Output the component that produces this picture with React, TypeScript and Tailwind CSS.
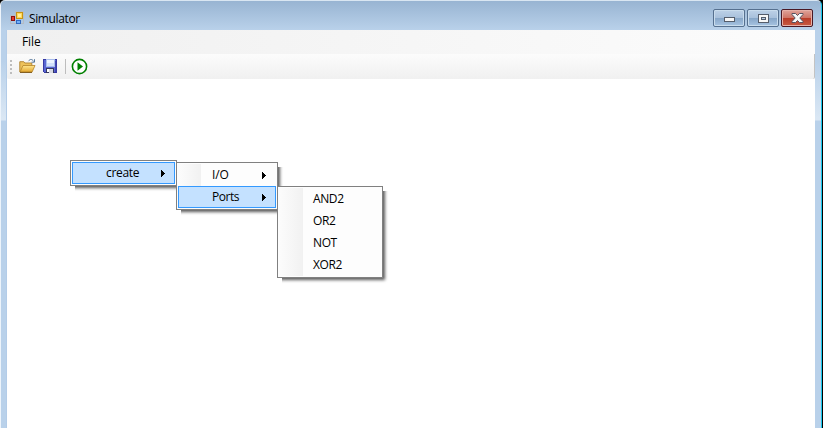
import type { ReactNode } from "react";

const label = "font-['Open_Sans','Noto_Sans',sans-serif] text-[12px] leading-[16px] text-black whitespace-nowrap";

function AppIcon() {
  return (
    <svg width="14" height="14" viewBox="0 0 14 14" shapeRendering="crispEdges">
      <path d="M5.5 4.5V.5h8v12h-13v-8h5Z" fill="none" stroke="#b5bcc4" />
      <rect x="1" y="5" width="4" height="5" fill="#8d1010" />
      <rect x="2" y="6" width="2" height="3" fill="#e83b2d" />
      <rect x="6" y="1" width="7" height="7" fill="#c69413" />
      <rect x="7" y="2" width="5" height="5" fill="#ffd75a" />
      <rect x="8" y="3" width="3" height="3" fill="#fff09c" />
      <rect x="6" y="9" width="5" height="4" fill="#2f68c0" />
      <rect x="7" y="10" width="3" height="2" fill="#72b0fa" />
    </svg>
  );
}

function OpenIcon() {
  return (
    <svg width="17" height="16" viewBox="0 0 17 16">
      <defs>
        <linearGradient id="folder" x1="0" y1="0" x2="0" y2="1">
          <stop offset="0" stopColor="#ffe68f" />
          <stop offset="1" stopColor="#e2a52c" />
        </linearGradient>
      </defs>
      <path d="M.8 14V3.7h4l1 1.3h7v3" fill="#eec25a" stroke="#b58a3a" />
      <path d="M1 14.2 4 7.5h12L13 14.2Z" fill="url(#folder)" stroke="#b48428" strokeWidth=".8" />
      <path d="M1 14.4h12" stroke="#7b581b" />
      <path d="M9.5 3.2C11 .8 13 .8 14.8 3.5M15.5 1.2v3h-3" fill="none" stroke="#56789b" />
    </svg>
  );
}

function SaveIcon() {
  return (
    <svg width="14" height="14" viewBox="0 0 14 14" shapeRendering="crispEdges">
      <path d="M0 0h14v14H1l-1-1Z" fill="#3739a3" />
      <path d="M1 1h12v12H1Z" fill="#5966d2" />
      <path d="M3 0h9v8H3Z" fill="#a9bdec" />
      <path d="M4 1h7v3H4Z" fill="#edf4ff" />
      <path d="M4 4h7v3H4Z" fill="#d3e1fb" />
      <path d="M3 9h8v5H3Z" fill="#34385f" />
      <path d="M6 10h4v4H6Z" fill="#d8dae2" />
      <path d="M4 10h2v3H4Z" fill="#ffffff" />
      <path d="M12 2h1v11h-1Z" fill="#4248b2" />
    </svg>
  );
}

function RunIcon() {
  return (
    <svg width="17" height="17" viewBox="0 0 17 17">
      <circle cx="8.5" cy="8.5" r="7.1" fill="#fff" stroke="#008000" strokeWidth="1.6" />
      <path d="M6.5 4.3v8.4L12 8.5Z" fill="#008000" />
    </svg>
  );
}

function CaptionButton({ close = false, children }: { close?: boolean; children: ReactNode }) {
  const tone = close
    ? "border-[#491824] bg-[linear-gradient(#dfa49b_0%,#cf7668_47%,#b83b28_50%,#c85b43_100%)] shadow-[inset_0_0_0_1px_#e6b0a8]"
    : "border-[#56708f] bg-[linear-gradient(#bdd1e7_0%,#a9c1dc_47%,#86a5c7_50%,#a7c4e2_100%)] shadow-[inset_0_0_0_1px_#c9dced]";
  return (
    <div className={`flex h-[18px] w-8 items-center justify-center rounded-[2px] border ${tone}`}>
      {children}
    </div>
  );
}

function Arrow() {
  return (
    <svg className="shrink-0" width="4" height="7" viewBox="0 0 4 7" shapeRendering="crispEdges">
      <path d="M0 0h1v1h1v1h1v1h1v1H3v1H2v1H1v1H0Z" fill="#000" />
    </svg>
  );
}

const panel = "absolute border border-[#808080] bg-[#fdfdfd] p-px";
const shadow = "shadow-[2px_2px_3px_0px_rgba(0,0,0,0.65)] [clip-path:polygon(0_0,100%_0,100%_5px,calc(100%+8px)_5px,calc(100%+8px)_calc(100%+8px),5px_calc(100%+8px),5px_100%,0_100%)]";
const gutter = "bg-[linear-gradient(90deg,#fcfcfc,#f1f1f1)]";

function ContextMenus() {
  return (
    <>
      <div className={`${panel} ${shadow} left-[70px] top-[160px] h-[26px] w-[107px]`}>
        <div className="flex h-full items-center border border-[#3399ff] bg-[#c4e1ff] pl-[33px] pr-[9px]">
          <span className={`${label} tracking-[-0.3px]`}>create</span>
          <span className="ml-auto"><Arrow /></span>
        </div>
      </div>
      <div className={`${panel} ${shadow} left-[176px] top-[162px] h-[48px] w-[102px]`}>
        <div className="flex h-[22px] items-center pr-[10px]">
          <div className={`h-full w-[23px] ${gutter}`} />
          <span className={`${label} ml-[11px] tracking-[-0.1px]`}>I/O</span>
          <span className="ml-auto"><Arrow /></span>
        </div>
        <div className="flex h-[22px] items-center border border-[#3399ff] bg-[#c4e1ff] pl-[33px] pr-[9px]">
          <span className={`${label} tracking-[-0.45px]`}>Ports</span>
          <span className="ml-auto"><Arrow /></span>
        </div>
      </div>
      <div className={`${panel} ${shadow} left-[277px] top-[186px] flex h-[92px] w-[106px]`}>
        <div className={`h-full w-[24px] ${gutter}`} />
        <ul className="ml-[10px]">
          {["AND2", "OR2", "NOT", "XOR2"].map((name) => (
            <li key={name} className={`${label} flex h-[22px] items-center tracking-[-0.4px]`}>{name}</li>
          ))}
        </ul>
      </div>
    </>
  );
}

export default function App() {
  return (
    <div className="relative h-[428px] w-[823px] overflow-hidden bg-black">
      <div className="flex h-full w-[822px] flex-col overflow-hidden rounded-t-[5px] border-x border-t border-l-[#edf4fb] border-r-[#16c8ee] border-t-[#d9e6f2] bg-[linear-gradient(#98b4d2_0px,#b9d1ea_29px,#b9d1ea_60px,#dae7f4_117px,#dae7f4_119px,#b9d1ea_120px)]">
        <header className="flex h-[29px] shrink-0 items-start pl-[9px] pr-2">
          <div className="mt-[10px]"><AppIcon /></div>
          <h1 className={`${label} ml-[5px] mt-[10px] tracking-[-0.37px]`}>Simulator</h1>
          <div className="ml-auto mt-2 flex gap-[2px]">
            <CaptionButton>
              <svg width="11" height="5" shapeRendering="crispEdges" className="mt-[3px]">
                <rect x=".5" y=".5" width="10" height="4" fill="#f7f7f7" stroke="#555d6b" />
              </svg>
            </CaptionButton>
            <CaptionButton>
              <svg width="11" height="9" shapeRendering="crispEdges">
                <rect x=".5" y=".5" width="10" height="8" fill="#f7f7f7" stroke="#555d6b" />
                <rect x="3.5" y="3.5" width="4" height="2" fill="#b9cde3" stroke="#555d6b" />
              </svg>
            </CaptionButton>
            <CaptionButton close>
              <svg width="13" height="10" viewBox="0 0 13 10">
                <path d="M1 .5h3.5l2 2 2-2H12v1L8.8 5 12 8.5v1H8.5l-2-2-2 2H1v-1L4.2 5 1 1.5Z" fill="#f8f8f8" stroke="#565361" />
              </svg>
            </CaptionButton>
          </div>
        </header>
        <main className="mr-[6px] ml-[5px] flex-1 border-l border-l-[#b3cce8] bg-white">
          <div className="h-[49px] bg-[#fdfdfd]">
            <nav className="flex h-6 items-center bg-[linear-gradient(90deg,#f0f0f0,#fcfcfc)] pl-[15px]">
              <span className={`${label} tracking-[-0.1px]`}>File</span>
            </nav>
            <div className="flex h-[25px] items-center rounded-b-[2px] border-r border-r-[#c3c3c3] bg-[linear-gradient(#fcfcfc,#f0f0f0)] pl-[3px]">
              <div className="mr-[7px] flex flex-col gap-[2px]">
                {[0, 1, 2, 3].map((dot) => <i key={dot} className="size-[2px] bg-[#bdbdbd]" />)}
              </div>
              <div className="-mt-px"><OpenIcon /></div>
              <div className="-mt-px ml-[7px]"><SaveIcon /></div>
              <div className="ml-2 h-[15px] w-px bg-[#bdbdbd]" />
              <div className="ml-[5px]"><RunIcon /></div>
            </div>
          </div>
        </main>
      </div>
      <ContextMenus />
    </div>
  );
}
